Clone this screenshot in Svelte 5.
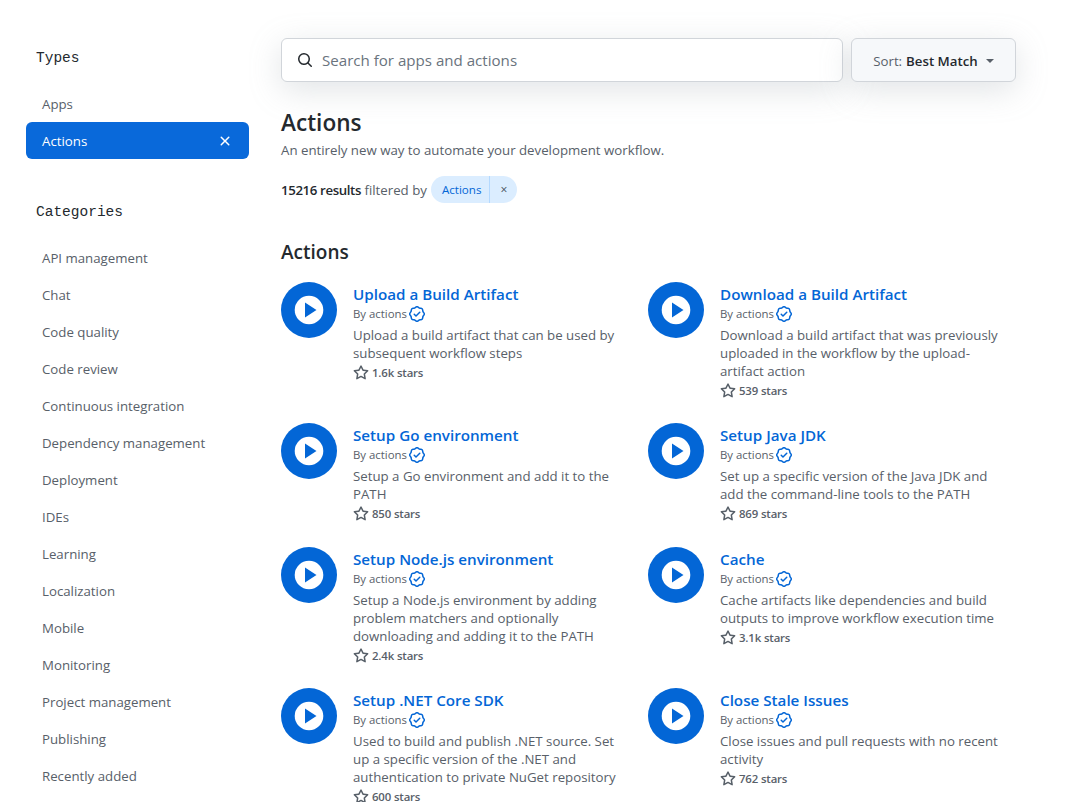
<script>
const types = ["Apps"];
const categories = ["API management","Chat","Code quality","Code review","Continuous integration","Dependency management","Deployment","IDEs","Learning","Localization","Mobile","Monitoring","Project management","Publishing","Recently added"];
const actions = [
 {t:"Upload a Build Artifact",d:"Upload a build artifact that can be used by subsequent workflow steps",s:"1.6k stars"},
 {t:"Download a Build Artifact",d:"Download a build artifact that was previously uploaded in the workflow by the upload-artifact action",s:"539 stars"},
 {t:"Setup Go environment",d:"Setup a Go environment and add it to the PATH",s:"850 stars"},
 {t:"Setup Java JDK",d:"Set up a specific version of the Java JDK and add the command-line tools to the PATH",s:"869 stars"},
 {t:"Setup Node.js environment",d:"Setup a Node.js environment by adding problem matchers and optionally downloading and adding it to the PATH",s:"2.4k stars"},
 {t:"Cache",d:"Cache artifacts like dependencies and build outputs to improve workflow execution time",s:"3.1k stars"},
 {t:"Setup .NET Core SDK",d:"Used to build and publish .NET source. Set up a specific version of the .NET and authentication to private NuGet repository",s:"600 stars"},
 {t:"Close Stale Issues",d:"Close issues and pull requests with no recent activity",s:"762 stars"},
];
</script>

<div class="page">
  <aside class="side">
    <h3 class="mono">Types</h3>
    <ul class="types">
      {#each types as x}<li class="item">{x}</li>{/each}
      <li class="item active">Actions
        <svg viewBox="0 0 16 16" width="16" height="16"><path d="M3.72 3.72a.75.75 0 0 1 1.06 0L8 6.94l3.22-3.22a.749.749 0 0 1 1.275.326.749.749 0 0 1-.215.734L9.06 8l3.22 3.22a.749.749 0 0 1-.326 1.275.749.749 0 0 1-.734-.215L8 9.06l-3.22 3.22a.751.751 0 0 1-1.042-.018.751.751 0 0 1-.018-1.042L6.94 8 3.72 4.78a.75.75 0 0 1 0-1.06Z"/></svg>
      </li>
    </ul>
    <h3 class="mono cat">Categories</h3>
    <ul class="cats">
      {#each categories as x}<li class="item">{x}</li>{/each}
    </ul>
  </aside>
  <main class="main">
    <div class="searchrow">
      <div class="search">
        <svg viewBox="0 0 16 16" width="16" height="16"><path d="M10.68 11.74a6 6 0 0 1-7.922-8.982 6 6 0 0 1 8.982 7.922l3.04 3.04a.749.749 0 0 1-.326 1.275.749.749 0 0 1-.734-.215ZM11.5 7a4.499 4.499 0 1 0-8.997 0A4.499 4.499 0 0 0 11.5 7Z"/></svg>
        <span>Search for apps and actions</span>
      </div>
      <div class="sort"><span class="lbl">Sort:</span> <span class="val">Best Match</span><i class="caret"></i></div>
    </div>
    <h1>Actions</h1>
    <p class="sub">An entirely new way to automate your development workflow.</p>
    <div class="results">
      <span><b>15216 results</b> filtered by</span>
      <span class="pill"><span class="pl">Actions</span><span class="px">×</span></span>
    </div>
    <h2>Actions</h2>
    <div class="grid">
      {#each actions as a}
        <div class="card">
          <svg class="logo" viewBox="0 0 56 56" width="56" height="56"><circle cx="28" cy="28" r="28" fill="#0366d6"/><circle cx="28" cy="28" r="14.3" fill="#fff"/><path d="M24 20.4v15.2L35.5 28Z" fill="#0366d6"/></svg>
          <div class="body">
            <div class="title">{a.t}</div>
            <div class="by">By actions
              <svg viewBox="0 0 16 16" width="16" height="16"><path d="m9.585.52.929.68c.153.112.331.186.518.215l1.138.175a2.678 2.678 0 0 1 2.24 2.24l.174 1.139c.029.187.103.365.215.518l.68.928a2.677 2.677 0 0 1 0 3.17l-.68.928a1.174 1.174 0 0 0-.215.518l-.175 1.138a2.678 2.678 0 0 1-2.241 2.241l-1.138.175a1.17 1.17 0 0 0-.518.215l-.928.68a2.677 2.677 0 0 1-3.17 0l-.928-.68a1.174 1.174 0 0 0-.518-.215L3.83 14.41a2.678 2.678 0 0 1-2.24-2.24l-.175-1.138a1.17 1.17 0 0 0-.215-.518l-.68-.928a2.677 2.677 0 0 1 0-3.17l.68-.928c.112-.153.186-.331.215-.518l.175-1.14a2.678 2.678 0 0 1 2.24-2.24l1.139-.175c.187-.029.365-.103.518-.215l.928-.68a2.677 2.677 0 0 1 3.17 0ZM7.303 1.728l-.927.68a2.67 2.67 0 0 1-1.18.489l-1.137.174a1.179 1.179 0 0 0-.987.987l-.174 1.136a2.677 2.677 0 0 1-.489 1.18l-.68.928a1.18 1.18 0 0 0 0 1.394l.68.927c.256.348.424.753.489 1.18l.174 1.137c.078.509.478.909.987.987l1.136.174a2.67 2.67 0 0 1 1.18.489l.928.68c.414.305.979.305 1.394 0l.927-.68a2.67 2.67 0 0 1 1.18-.489l1.137-.174a1.18 1.18 0 0 0 .987-.987l.174-1.136a2.67 2.67 0 0 1 .489-1.18l.68-.928a1.176 1.176 0 0 0 0-1.394l-.68-.927a2.686 2.686 0 0 1-.489-1.18l-.174-1.137a1.179 1.179 0 0 0-.987-.987l-1.136-.174a2.677 2.677 0 0 1-1.18-.489l-.928-.68a1.176 1.176 0 0 0-1.394 0ZM11.28 6.78l-3.75 3.75a.75.75 0 0 1-1.06 0L4.72 8.78a.751.751 0 0 1 .018-1.042.751.751 0 0 1 1.042-.018l1.22 1.22 3.22-3.22a.751.751 0 0 1 1.042.018.751.751 0 0 1 .018 1.042Z"/></svg>
            </div>
            <p class="desc">{a.d}</p>
            <div class="stars">
              <svg viewBox="0 0 16 16" width="16" height="16"><path d="M8 .25a.75.75 0 0 1 .673.418l1.882 3.815 4.21.612a.75.75 0 0 1 .416 1.279l-3.046 2.97.719 4.192a.751.751 0 0 1-1.088.791L8 12.347l-3.766 1.98a.75.75 0 0 1-1.088-.79l.72-4.194L.818 6.374a.75.75 0 0 1 .416-1.28l4.21-.611L7.327.668A.75.75 0 0 1 8 .25Zm0 2.445L6.615 5.5a.75.75 0 0 1-.564.41l-3.097.45 2.24 2.184a.75.75 0 0 1 .216.664l-.528 3.084 2.769-1.456a.75.75 0 0 1 .698 0l2.77 1.456-.53-3.084a.75.75 0 0 1 .216-.664l2.24-2.183-3.096-.45a.75.75 0 0 1-.564-.41L8 2.694Z"/></svg>
              <span>{a.s}</span>
            </div>
          </div>
        </div>
      {/each}
    </div>
  </main>
</div>

<style>
:global(body){margin:0;background:#fff;}
.page{display:flex;height:802px;overflow:hidden;box-sizing:border-box;padding:0 67px 0 26px;font-family:"Open Sans",sans-serif;font-size:13.25px;color:#586069;}
.side{width:223px;flex:none;}
.mono{font-family:"Liberation Mono",monospace;font-size:14.5px;font-weight:400;color:#24292e;margin:0;padding:0 0 0 10px;line-height:20px;}
h3.mono{padding-top:48px;}
h3.cat{padding-top:43px;}
ul{list-style:none;margin:0;padding:0;}
.types{margin-top:17px;}
.cats{margin-top:17px;}
.item{height:37px;display:flex;align-items:center;justify-content:space-between;padding:0 16px;border-radius:6px;box-sizing:border-box;}
.active{background:#0969da;color:#fff;}
.active svg{fill:#fff;}
.main{margin-left:32px;flex:1;min-width:0;}
.searchrow{display:flex;gap:8px;margin-top:38px;height:44px;}
.search{flex:1;display:flex;align-items:center;gap:9px;padding:0 15px;border:1px solid #d1d5da;border-radius:6px;background:#fff;box-shadow:0 8px 32px rgba(149,157,165,.28);font-size:15.1px;color:#6a737d;}
.search svg{fill:#24292e;}
.sort{width:165px;flex:none;box-sizing:border-box;display:flex;align-items:center;justify-content:center;gap:4px;padding-top:1px;border:1px solid #d1d5da;border-radius:6px;background:#f6f8fa;box-shadow:0 8px 32px rgba(149,157,165,.28);color:#586069;}
.val{color:#24292e;font-weight:600;}
.caret{width:0;height:0;border:4px solid transparent;border-top-color:#586069;border-bottom:0;margin-left:4px;}
h1{font-size:22.6px;font-weight:600;color:#24292e;margin:24px 0 0;line-height:34px;}
.sub{margin:0;line-height:20px;}
.results{display:flex;align-items:center;gap:4px;margin-top:16px;height:27px;}
.results b{font-weight:600;color:#24292e;letter-spacing:-.38px;}
.pill{display:inline-flex;height:27px;align-items:center;background:#dbedff;border-radius:14px;font-size:11.6px;color:#0366d6;}
.pl{padding:0 8px 0 11px;height:27px;line-height:27px;border-right:1px solid #b4d9ff;box-sizing:border-box;}
.px{width:27px;text-align:center;color:#444d56;font-size:12px;}
h2{font-size:19px;font-weight:600;color:#24292e;margin:34px 0 0;line-height:30px;}
.grid{display:grid;grid-template-columns:351px 351px;column-gap:16px;row-gap:23.4px;margin-top:15px;align-items:start;}
.card{display:flex;gap:16px;}
.logo{flex:none;}
.title{font-size:15.2px;font-weight:600;color:#0366d6;line-height:24px;}
.by{font-size:11.4px;line-height:18px;display:flex;align-items:center;gap:2px;margin-top:-1px;}
.by svg{fill:#0366d6;}
.desc{margin:3px 0 0;line-height:18px;}
.stars{display:flex;align-items:center;gap:3px;font-size:11.4px;font-weight:600;letter-spacing:-.15px;line-height:18px;margin-top:2px;}
.stars svg{fill:#586069;}
</style>
